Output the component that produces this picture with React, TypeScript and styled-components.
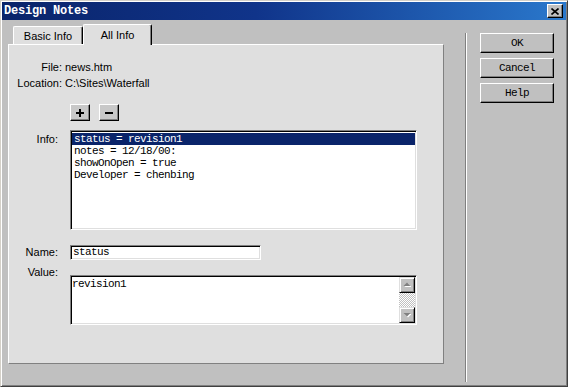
import React from 'react';
import styled, { createGlobalStyle } from 'styled-components';

const GlobalStyle = createGlobalStyle`
  html, body { margin: 0; padding: 0; background: #c0c0c0; }
  body { font-family: "Liberation Sans", Arial, sans-serif; }
  * { box-sizing: border-box; }
`;

const mono = `"Liberation Mono", "Courier New", monospace`;

const Window = styled.div`
  width: 568px;
  height: 387px;
  background: #c0c0c0;
  border-top: 1px solid #d4d0c8;
  border-left: 1px solid #d4d0c8;
  border-right: 1px solid #404040;
  border-bottom: 1px solid #404040;
  box-shadow: inset 1px 1px 0 #ffffff, inset -1px -1px 0 #808080;
  padding: 1px;
  display: flex;
  flex-direction: column;
`;

const TitleBar = styled.div`
  height: 18px;
  flex: none;
  display: flex;
  align-items: center;
  justify-content: space-between;
  padding: 0 3px 0 2px;
  background: linear-gradient(90deg, #0a246a 0%, #10348a 45%, #2a78cc 100%);
`;

const Title = styled.span`
  font-family: ${mono};
  font-weight: bold;
  font-size: 12px;
  letter-spacing: -0.2px;
  color: #ffffff;
`;

const CloseButton = styled.div`
  width: 16px;
  height: 14px;
  background: #c0c0c0;
  border-top: 1px solid #ffffff;
  border-left: 1px solid #ffffff;
  border-right: 1px solid #000000;
  border-bottom: 1px solid #000000;
  box-shadow: inset -1px -1px 0 #808080;
  display: flex;
  align-items: center;
  justify-content: center;
`;

const Body = styled.div`
  flex: 1;
  display: flex;
  padding: 4px 0 0 6px;
`;

const LeftColumn = styled.div`
  width: 436px;
  display: flex;
  flex-direction: column;
`;

const TabStrip = styled.div`
  height: 20px;
  display: flex;
  align-items: flex-end;
  padding-left: 5px;
  position: relative;
  z-index: 1;
`;

const Tab = styled.div<{ $active?: boolean; $w: number }>`
  width: ${p => p.$w}px;
  height: ${p => (p.$active ? 21 : 18)}px;
  margin-bottom: ${p => (p.$active ? -1 : 0)}px;
  background: #dfdfdf;
  border-top: 1px solid #ffffff;
  border-left: 1px solid #ffffff;
  border-right: 1px solid #000000;
  box-shadow: inset -1px 0 0 #808080;
  border-radius: 2px 2px 0 0;
  display: flex;
  align-items: center;
  justify-content: center;
  font-size: 11px;
  color: #000;
  padding-bottom: ${p => (p.$active ? 1 : 0)}px;
`;

const Panel = styled.div`
  height: 320px;
  background: #dfdfdf;
  border-top: 1px solid #ffffff;
  border-left: 1px solid #ffffff;
  border-right: 1px solid #808080;
  border-bottom: 1px solid #808080;
  padding-top: 14px;
  display: flex;
  flex-direction: column;
`;

const FileGrid = styled.div`
  display: grid;
  grid-template-columns: 53px auto;
  column-gap: 3px;
  font-size: 11px;
  line-height: 16px;
  color: #000;
`;

const RightLabel = styled.span`
  text-align: right;
`;

const SmallButtonRow = styled.div`
  display: flex;
  gap: 9px;
  margin-top: 13px;
  padding-left: 61px;
`;

const SmallButton = styled.div`
  width: 20px;
  height: 17px;
  background: #c8c8c8;
  border-top: 1px solid #ffffff;
  border-left: 1px solid #ffffff;
  border-right: 1px solid #000000;
  border-bottom: 1px solid #000000;
  box-shadow: inset -1px -1px 0 #808080;
  display: flex;
  align-items: center;
  justify-content: center;
`;

const FormGrid = styled.div`
  display: grid;
  grid-template-columns: 49px auto;
  column-gap: 12px;
  row-gap: 15px;
  margin-top: 9px;
  font-size: 11px;
  color: #000;
`;

const FormLabel = styled.span<{ $offset?: number; $center?: boolean }>`
  text-align: right;
  line-height: 13px;
  align-self: ${p => (p.$center ? 'center' : 'start')};
  margin-top: ${p => p.$offset ?? 0}px;
`;

const sunken = `
  background: #ffffff;
  border-top: 1px solid #808080;
  border-left: 1px solid #808080;
  border-right: 1px solid #ffffff;
  border-bottom: 1px solid #ffffff;
  box-shadow: inset 1px 1px 0 #000000, inset -1px -1px 0 #dfdfdf;
`;

const ListBox = styled.div`
  ${sunken}
  width: 347px;
  height: 100px;
  padding: 2px 1px 1px 1px;
  font-family: ${mono};
  font-size: 11px;
  letter-spacing: -0.6px;
`;

const ListRow = styled.div<{ $selected?: boolean }>`
  height: 12px;
  line-height: 12px;
  padding-left: 2px;
  white-space: pre;
  background: ${p => (p.$selected ? '#0a246a' : 'transparent')};
  color: ${p => (p.$selected ? '#ffffff' : '#000000')};
`;

const TextInput = styled.div`
  ${sunken}
  width: 191px;
  height: 15px;
  padding: 0 2px;
  font-family: ${mono};
  font-size: 11px;
  letter-spacing: -0.6px;
  line-height: 13px;
  color: #000;
`;

const ValueBox = styled.div`
  ${sunken}
  width: 347px;
  height: 50px;
  padding: 1px 1px 1px 1px;
  display: flex;
`;

const ValueText = styled.div`
  flex: 1;
  padding: 1px 0 0 0;
  font-family: ${mono};
  font-size: 11px;
  letter-spacing: -0.6px;
  line-height: 12px;
  color: #000;
`;

const ScrollBar = styled.div`
  width: 16px;
  display: flex;
  flex-direction: column;
`;

const ScrollButton = styled.div`
  width: 16px;
  height: 16px;
  flex: none;
  background: #c0c0c0;
  border-top: 1px solid #dfdfdf;
  border-left: 1px solid #dfdfdf;
  border-right: 1px solid #000000;
  border-bottom: 1px solid #000000;
  box-shadow: inset 1px 1px 0 #ffffff, inset -1px -1px 0 #808080;
  display: flex;
  align-items: center;
  justify-content: center;
`;

const ScrollTrack = styled.div`
  flex: 1;
  background: repeating-conic-gradient(#c0c0c0 0% 25%, #ffffff 0% 50%) 0 0 / 2px 2px;
`;

const Separator = styled.div`
  width: 2px;
  border-left: 1px solid #808080;
  border-right: 1px solid #ffffff;
  margin: 9px 0 3px 21px;
`;

const ButtonColumn = styled.div`
  display: flex;
  flex-direction: column;
  gap: 5px;
  margin: 9px 0 0 13px;
`;

const DialogButton = styled.div`
  width: 74px;
  height: 20px;
  background: #c0c0c0;
  border-top: 1px solid #ffffff;
  border-left: 1px solid #ffffff;
  border-right: 1px solid #000000;
  border-bottom: 1px solid #000000;
  box-shadow: inset -1px -1px 0 #808080;
  display: flex;
  align-items: center;
  justify-content: center;
  font-family: ${mono};
  font-size: 11px;
  letter-spacing: -0.6px;
  color: #000;
`;

const CloseIcon = () => (
  <svg width="8" height="7" viewBox="0 0 8 7">
    <path d="M0.5 0.5 L7.5 6.5 M7.5 0.5 L0.5 6.5" stroke="#000" strokeWidth="1.6" fill="none" />
  </svg>
);

const PlusIcon = () => (
  <svg width="8" height="8" viewBox="0 0 8 8">
    <rect x="0" y="3" width="8" height="2" fill="#000" />
    <rect x="3" y="0" width="2" height="8" fill="#000" />
  </svg>
);

const MinusIcon = () => (
  <svg width="8" height="8" viewBox="0 0 8 8">
    <rect x="0" y="3" width="8" height="2" fill="#000" />
  </svg>
);

const ArrowIcon = ({ down }: { down?: boolean }) => (
  <svg width="8" height="6" viewBox="0 0 8 6">
    {down ? (
      <>
        <polygon points="1.5,2 8.5,2 5,5.5" fill="#ffffff" />
        <polygon points="0.5,1 7.5,1 4,4.5" fill="#808080" />
      </>
    ) : (
      <>
        <polygon points="5,1.5 8.5,5 1.5,5" fill="#ffffff" />
        <polygon points="4,0.5 7.5,4 0.5,4" fill="#808080" />
      </>
    )}
  </svg>
);

const infoItems = [
  'status = revision1',
  'notes = 12/18/00:',
  'showOnOpen = true',
  'Developer = chenbing',
];

export default function App() {
  return (
    <>
      <GlobalStyle />
      <Window>
        <TitleBar>
          <Title>Design Notes</Title>
          <CloseButton>
            <CloseIcon />
          </CloseButton>
        </TitleBar>
        <Body>
          <LeftColumn>
            <TabStrip>
              <Tab $w={70}>Basic Info</Tab>
              <Tab $w={69} $active>
                All Info
              </Tab>
            </TabStrip>
            <Panel>
              <FileGrid>
                <RightLabel>File:</RightLabel>
                <span>news.htm</span>
                <RightLabel>Location:</RightLabel>
                <span>C:\Sites\Waterfall</span>
              </FileGrid>
              <SmallButtonRow>
                <SmallButton>
                  <PlusIcon />
                </SmallButton>
                <SmallButton>
                  <MinusIcon />
                </SmallButton>
              </SmallButtonRow>
              <FormGrid>
                <FormLabel $offset={3}>Info:</FormLabel>
                <ListBox>
                  {infoItems.map((t, i) => (
                    <ListRow key={t} $selected={i === 0}>
                      {t}
                    </ListRow>
                  ))}
                </ListBox>
                <FormLabel $center>Name:</FormLabel>
                <TextInput>status</TextInput>
                <FormLabel $offset={-9}>Value:</FormLabel>
                <ValueBox>
                  <ValueText>revision1</ValueText>
                  <ScrollBar>
                    <ScrollButton>
                      <ArrowIcon />
                    </ScrollButton>
                    <ScrollTrack />
                    <ScrollButton>
                      <ArrowIcon down />
                    </ScrollButton>
                  </ScrollBar>
                </ValueBox>
              </FormGrid>
            </Panel>
          </LeftColumn>
          <Separator />
          <ButtonColumn>
            <DialogButton>OK</DialogButton>
            <DialogButton>Cancel</DialogButton>
            <DialogButton>Help</DialogButton>
          </ButtonColumn>
        </Body>
      </Window>
    </>
  );
}
